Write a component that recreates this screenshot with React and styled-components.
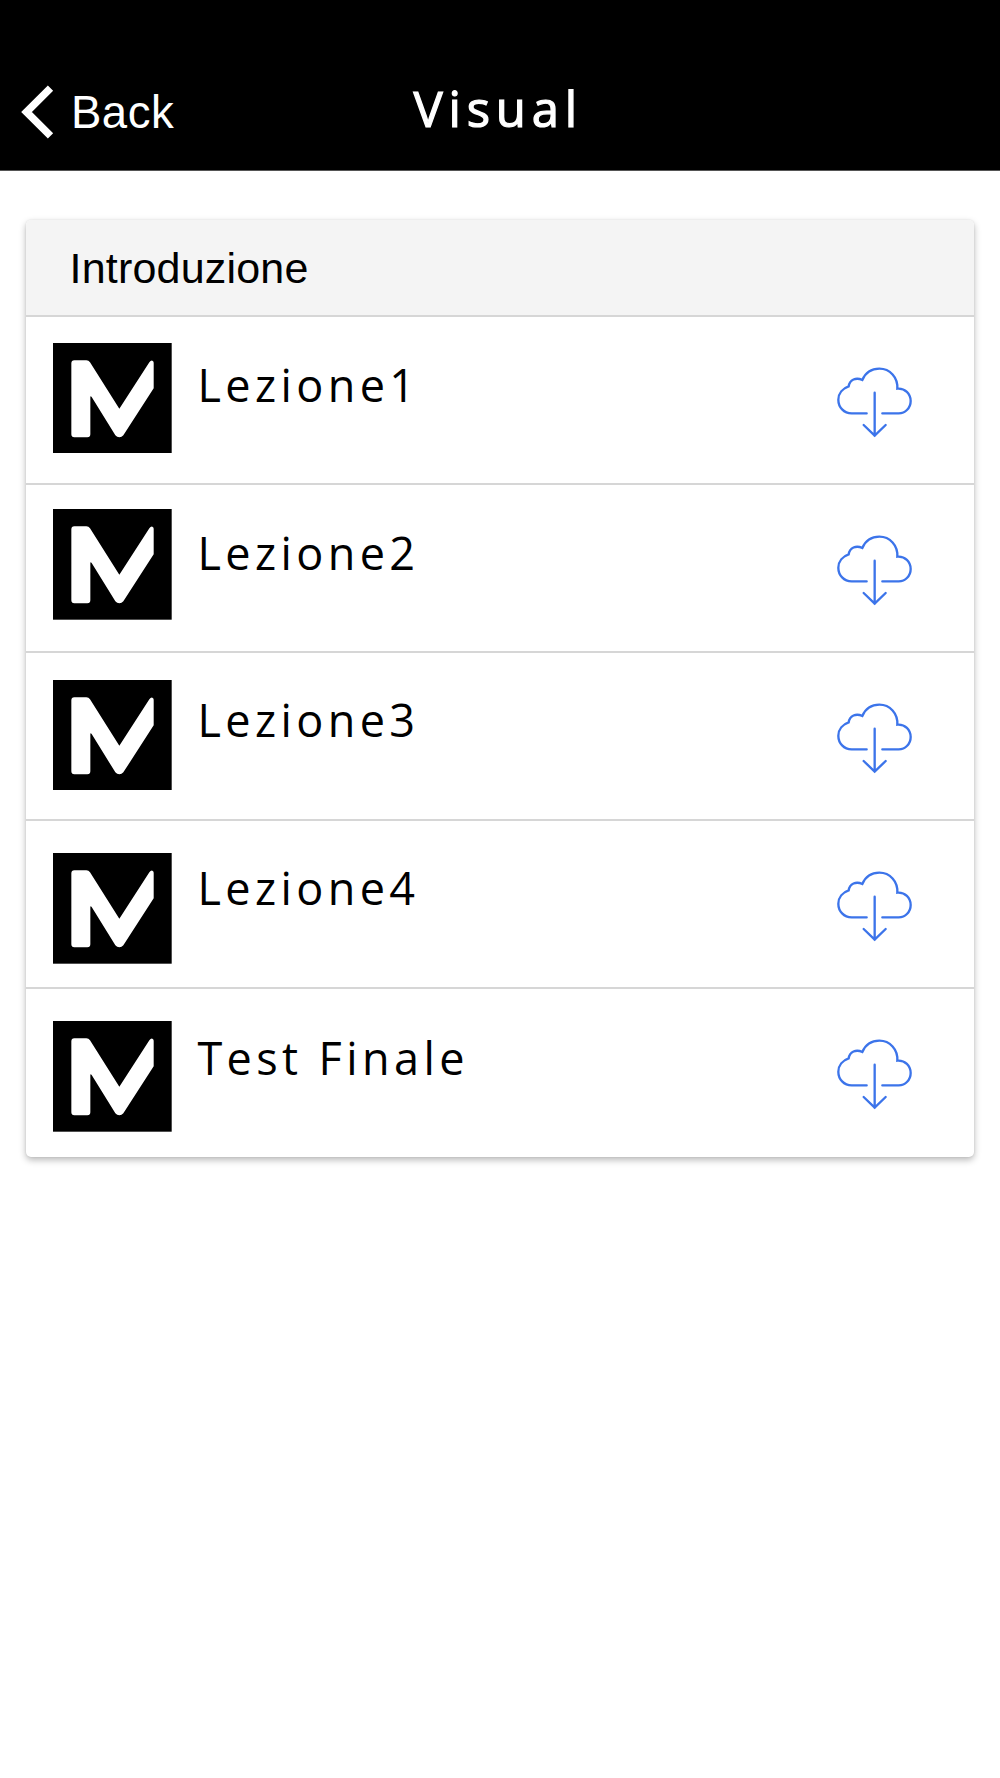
import React from "react";
import styled, { createGlobalStyle } from "styled-components";

const GlobalStyle = createGlobalStyle`
  *, *::before, *::after { box-sizing: border-box; }
  body { margin: 0; background: #fff; }
`;

const Screen = styled.div`
  width: 1000px;
  min-height: 1778px;
  background: #fff;
  color: #000;
`;

const NavBar = styled.header`
  display: grid;
  grid-template-columns: 413.5px 1fr;
  height: 171px;
  background: #000;
  border-bottom: 1px solid #555;
  color: #fff;
`;

const BackButton = styled.button`
  display: flex;
  align-items: flex-start;
  justify-self: start;
  padding: 85px 0 0 21px;
  border: 0;
  background: none;
  color: #fff;
`;

const BackLabel = styled.span`
  margin: 3px 0 0 17px;
  font: 400 45.500px/50px "Liberation Sans", Arial, sans-serif;
  letter-spacing: 0.5px;
`;

const NavTitle = styled.h1`
  margin: 75px 0 0;
  font: 400 49px/66px "Open Sans", sans-serif;
  letter-spacing: 5.8px;
  -webkit-text-stroke: 1.2px currentColor;
`;

const Card = styled.section`
  width: 948px;
  margin: 49px 0 0 26px;
  background: #fff;
  border-radius: 5px;
  box-shadow: 0 3px 7px rgba(0, 0, 0, 0.28), 0 0 2px rgba(0, 0, 0, 0.1);
  overflow: hidden;
`;

const CardHeader = styled.h2`
  height: 95px;
  margin: 0;
  padding: 24px 0 0 43.5px;
  background: #f4f4f4;
  font: 400 43px/48px "Liberation Sans", Arial, sans-serif;
  letter-spacing: 0.2px;
`;

const List = styled.ul`
  margin: 0;
  padding: 0;
  list-style: none;
`;

const Row = styled.li`
  display: flex;
  align-items: flex-start;
  height: 168px;
  padding: 0 59px 0 27.4px;
  border-top: 2px solid #d6d6d6;

  &:last-child { height: 170px; }
`;

const Thumb = styled.svg`
  flex: none;
  width: 118.7px;
  height: 110.7px;
  margin-top: ${(p) => p.$top}px;
`;

const LessonTitle = styled.span`
  flex: 1;
  margin: ${(p) => p.$top}px 0 0 25.3px;
  font: 400 45px/60px "Open Sans", sans-serif;
  letter-spacing: 4.4px;
`;

const DownloadButton = styled.button`
  display: flex;
  margin: 48px 0 0;
  padding: 0;
  border: 0;
  background: none;
  color: #3c74ea;
`;

function ChevronLeft() {
  return (
    <svg width="33" height="54" viewBox="0 0 33 54" fill="none" stroke="currentColor" strokeWidth="7.5">
      <path d="M29.5 3.2 5.5 27l24 23.8" />
    </svg>
  );
}

function CloudDownload() {
  return (
    <svg width="80" height="75" viewBox="75 75 240 225" fill="none" stroke="currentColor" strokeWidth="7" strokeLinecap="round">
      <path d="M170 220H125C102 220 85 202 85 179C85 160 98 145 116 139C119 119 138 111 157 120C166 99 185 86 208 86C240 86 264 112 262 146C285 144 302 161 302 183C302 204 286 220 266 220H217" />
      <path d="M194 158V287M161 255L194 287L227 255" />
    </svg>
  );
}

function Logo({ top }) {
  return (
    <Thumb $top={top} viewBox="0 0 356 332" preserveAspectRatio="none">
      <rect width="356" height="332" fill="#000" />
      <path
        fill="#fff"
        d="M64 52H100Q107 52 111 58L199 197L289 58Q293 52 298 53Q302 54 302 59V136L211 277Q206 283 199 283Q192 283 187 277L116 162Q112 157 112 163V274Q112 283 103 283H64Q55 283 55 274V61Q55 52 64 52Z"
      />
    </Thumb>
  );
}

const lessons = [
  { title: "Lezione1", logoTop: 25.5, titleTop: 38 },
  { title: "Lezione2", logoTop: 24.3, titleTop: 38 },
  { title: "Lezione3", logoTop: 26.5, titleTop: 37 },
  { title: "Lezione4", logoTop: 32, titleTop: 37 },
  { title: "Test Finale", logoTop: 32, titleTop: 39 },
];

export default function App() {
  return (
    <Screen>
      <GlobalStyle />
      <NavBar>
        <BackButton>
          <ChevronLeft />
          <BackLabel>Back</BackLabel>
        </BackButton>
        <NavTitle>Visual</NavTitle>
      </NavBar>
      <Card>
        <CardHeader>Introduzione</CardHeader>
        <List>
          {lessons.map((l) => (
            <Row key={l.title}>
              <Logo top={l.logoTop} />
              <LessonTitle $top={l.titleTop}>{l.title}</LessonTitle>
              <DownloadButton aria-label="Download">
                <CloudDownload />
              </DownloadButton>
            </Row>
          ))}
        </List>
      </Card>
    </Screen>
  );
}
